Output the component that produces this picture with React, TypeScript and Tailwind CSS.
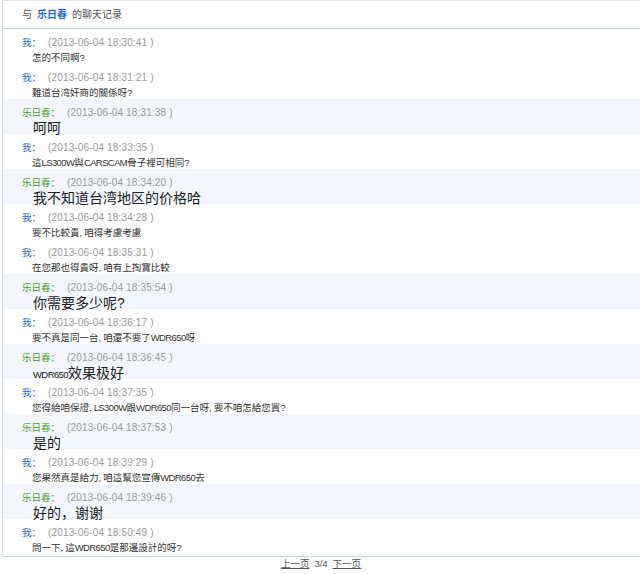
import React from 'react';

type Msg = { me: boolean; time: string; text: string };

const messages: Msg[] = [
  { me: true, time: '18:30:41', text: '怎的不同啊?' },
  { me: true, time: '18:31:21', text: '難道台湾奸商的關係呀?' },
  { me: false, time: '18:31:38', text: '呵呵' },
  { me: true, time: '18:33:35', text: '這LS300W與CARSCAM骨子裡可相同?' },
  { me: false, time: '18:34:20', text: '我不知道台湾地区的价格哈' },
  { me: true, time: '18:34:28', text: '要不比較貴,咱得考慮考慮' },
  { me: true, time: '18:35:31', text: '在您那也得貴呀,咱有上掏寶比較' },
  { me: false, time: '18:35:54', text: '你需要多少呢?' },
  { me: true, time: '18:36:17', text: '要不真是同一台,咱還不要了WDR650呀' },
  { me: false, time: '18:36:45', text: 'WDR650效果极好' },
  { me: true, time: '18:37:35', text: '您得給咱保證,LS300W跟WDR650同一台呀,要不咱怎給您買?' },
  { me: false, time: '18:37:53', text: '是的' },
  { me: true, time: '18:39:29', text: '您果然真是給力,咱這幫您宣傳WDR650去' },
  { me: false, time: '18:39:46', text: '好的，谢谢' },
  { me: true, time: '18:50:49', text: '問一下,這WDR650是那邊設計的呀?' },
];

const font = { fontFamily: '"Liberation Sans", "Noto Sans CJK SC", sans-serif' };

// latin words sit a bit tighter than the CJK around them
const Mixed = ({ text, big }: { text: string; big: boolean }) => {
  const parts = text.match(/[A-Za-z0-9]+|,|[^A-Za-z0-9,]+/g) || [];
  return (
    <>
      {parts.map((p, i) =>
        p === ',' ? (
          <span key={i} className="mr-[2px]">,</span>
        ) : /^[A-Za-z0-9]+$/.test(p) ? (
          <span key={i} className={big ? 'text-[9.5px] tracking-[-0.6px]' : 'tracking-[-0.6px]'}>
            {p}
          </span>
        ) : (
          <span key={i}>{p}</span>
        )
      )}
    </>
  );
};

const Row = ({ m }: { m: Msg }) => (
  <div className={`h-[35px] pl-[19px] pt-[8px] ${m.me ? 'bg-white' : 'bg-[#f3f7fb]'}`}>
    <div className="flex items-center leading-[12px]">
      <span className={`text-[9.5px] mr-[7px] ${m.me ? 'text-[#2a6ad2]' : 'text-[#4c9a28]'}`}>
        {m.me ? '我：' : '乐日春：'}
      </span>
      <span className="text-[10px] tracking-[0.15px] text-[#9a9a9a] whitespace-pre">(2013-06-04 {m.time} )</span>
    </div>
    {m.me ? (
      <div className="mt-[3px] pl-[10px] text-[9.5px] leading-[12px] text-[#333]">
        <Mixed text={m.text} big={false} />
      </div>
    ) : (
      <div className="mt-[1px] pl-[11px] text-[14px] leading-[16px] text-[#222]">
        <Mixed text={m.text} big={true} />
      </div>
    )}
  </div>
);

export default function App() {
  return (
    <div className="w-[640px] h-[574px] bg-white overflow-hidden" style={font}>
      <div className="ml-[2px] border-t border-t-[#e4e4e4] border-l border-l-[#cfe0f0] border-b border-b-[#c6daed] w-[700px]">
        <div className="h-[28px] border-b border-b-[#b8d6f5] flex items-center pl-[19px] text-[10px] text-[#555]">
          <span>与</span>
          <span className="ml-[5px] mr-[5px] font-bold text-[#1e6ac7]">乐日春</span>
          <span>的聊天记录</span>
        </div>
        {messages.map((m, i) => (
          <Row key={i} m={m} />
        ))}
        <div className="h-[2px]" />
      </div>
      <div className="flex justify-center gap-[5px] pt-[1px] text-[9.5px] leading-[12px] text-[#555] pl-[2px]">
        <span className="underline">上一页</span>
        <span>3/4</span>
        <span className="underline">下一页</span>
      </div>
    </div>
  );
}
